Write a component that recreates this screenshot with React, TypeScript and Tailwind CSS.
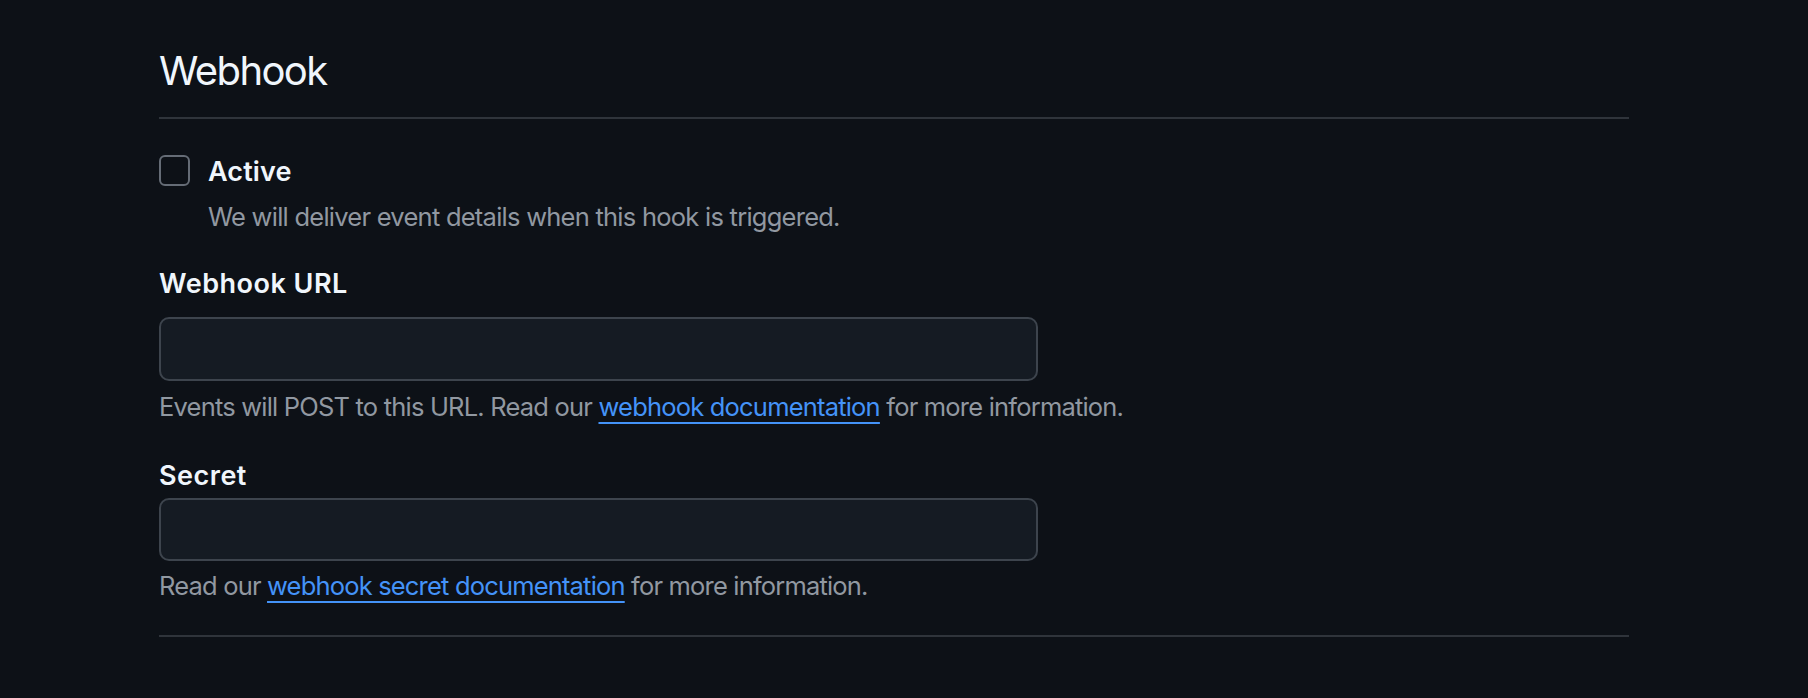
import React from "react";

export default function App() {
  return (
    <div
      className="min-h-[698px] w-full bg-[#0d1117] text-[#f0f6fc]"
      style={{ fontFamily: "Inter, 'Noto Sans', sans-serif" }}
    >
      <div className="ml-[159px] w-[1470px] pt-[47px]">
        <h2 className="border-b-2 border-[#2f343b] pb-[22px] text-[40px] font-normal leading-[48px] tracking-[-1.6px]">
          Webhook
        </h2>

        <div className="mt-[36px] flex items-start gap-[18px]">
          <div className="h-[31px] w-[31px] shrink-0 rounded-[6px] border-2 border-[#656c76]" />
          <div className="flex flex-col">
            <label className="pt-[1px] text-[27px] font-semibold leading-[32px] tracking-[0.1px]">Active</label>
            <p className="mt-[13px] text-[25.5px] leading-[32px] tracking-[-0.75px] text-[#9198a1]">
              We will deliver event details when this hook is triggered.
            </p>
          </div>
        </div>

        <label className="mt-[35px] block text-[27px] font-semibold leading-[32px] tracking-[0.5px]">
          Webhook URL
        </label>
        <div className="mt-[17px] h-[64px] w-[879px] rounded-[10px] border-2 border-[#3d444d] bg-[#151b23]" />
        <p className="mt-[10px] text-[25.5px] leading-[32px] tracking-[-0.8px] text-[#9198a1]">
          Events will POST to this URL. Read our{" "}
          <a className="text-[#4493f8] underline decoration-2 underline-offset-[6px]">webhook documentation</a>{" "}
          for more information.
        </p>

        <label className="mt-[37px] block text-[27px] font-semibold leading-[32px] tracking-[0.5px]">Secret</label>
        <div className="mt-[6px] h-[63px] w-[879px] rounded-[10px] border-2 border-[#3d444d] bg-[#151b23]" />
        <p className="mt-[9px] text-[25.5px] leading-[32px] tracking-[-0.82px] text-[#9198a1]">
          Read our{" "}
          <a className="text-[#4493f8] underline decoration-2 underline-offset-[6px]">webhook secret documentation</a>{" "}
          for more information.
        </p>

        <div className="mt-[33px] border-t-2 border-[#2f343b]" />
      </div>
    </div>
  );
}
